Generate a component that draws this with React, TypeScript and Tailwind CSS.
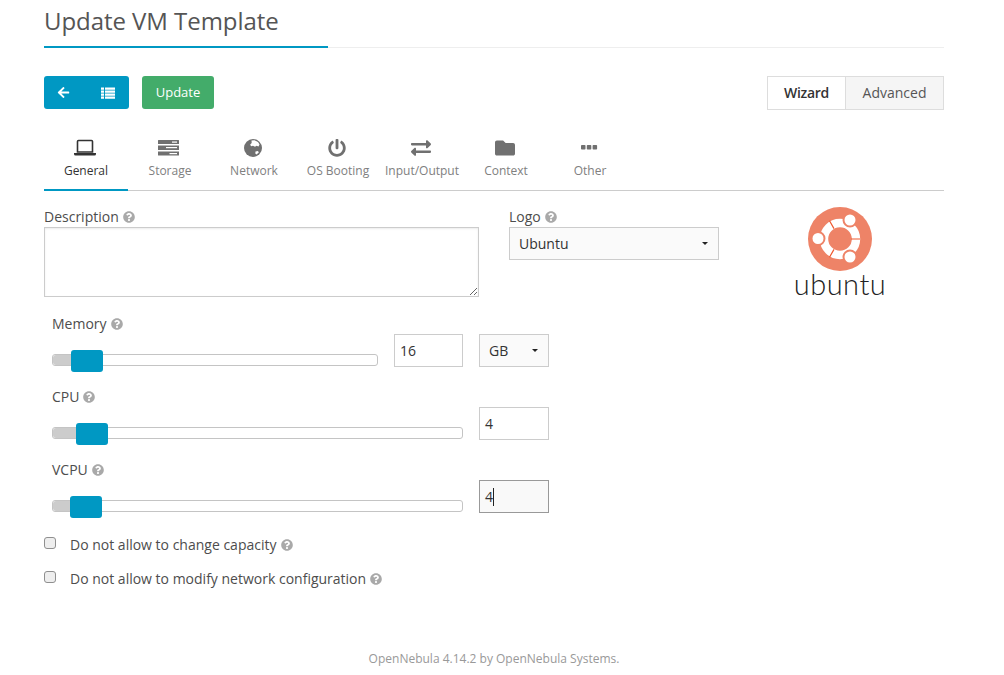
import { FaArrowLeft, FaPowerOff, FaExchangeAlt, FaFolder, FaQuestionCircle } from "react-icons/fa";

type IconProps = { className?: string };

function Dots({ className = "" }: IconProps) {
  return (
    <svg viewBox="0 0 20 20" className={className} fill="currentColor">
      <rect x="2" y="7" width="4.5" height="4.5" rx="0.8" />
      <rect x="7.8" y="7" width="4.5" height="4.5" rx="0.8" />
      <rect x="13.6" y="7" width="4.5" height="4.5" rx="0.8" />
    </svg>
  );
}

function Laptop({ className = "" }: IconProps) {
  return (
    <svg viewBox="0 0 22 20" className={className}>
      <path d="M3.5 3.5 a1 1 0 0 1 1-1 h13 a1 1 0 0 1 1 1 v10.5 h-15z" fill="none" stroke="currentColor" strokeWidth="1.6" />
      <path d="M0 15 h22 v1 a1.5 1.5 0 0 1-1.5 1.5 h-19 a1.5 1.5 0 0 1-1.5-1.5z" fill="currentColor" />
    </svg>
  );
}

function Storage({ className = "" }: IconProps) {
  return (
    <svg viewBox="0 0 21 20" className={className}>
      <path d="M0 2.5 a.5.5 0 0 1 .5-.5 h20 a.5.5 0 0 1 .5.5 v3.5 h-21z M0 7.5 h21 v4.5 h-21z M0 13.5 h21 v3.5 a.5.5 0 0 1-.5.5 h-20 a.5.5 0 0 1-.5-.5z" fill="currentColor" />
      <rect x="14" y="3.5" width="5" height="1.2" fill="#fff" />
      <rect x="8" y="9" width="11" height="1.2" fill="#fff" />
      <rect x="11.5" y="15" width="7.5" height="1.2" fill="#fff" />
    </svg>
  );
}

function Globe({ className = "" }: IconProps) {
  return (
    <svg viewBox="0 0 18 18" className={className}>
      <circle cx="9" cy="9" r="9" fill="currentColor" />
      <path d="M7.5 1.5 l3-.3 l3.5 1.8 l1.5 2.5 l-1 2 l-2-.7 l-1.5 1 l-2-1 l-2 .5 l-.8-1.8 l1.5-1.5z" fill="#fff" />
      <path d="M11.5 12.5 l2.5-.5 l.8 1.5 l-2.3 2 l-1.2-1z" fill="#fff" />
    </svg>
  );
}

function ThList({ className = "" }: IconProps) {
  return (
    <svg viewBox="0 0 14 12" className={className} fill="currentColor">
      <path d="M0 0.5 h3 v2.2 h-3z M4 0.5 h10 v2.2 h-10z M0 3.5 h3 v2.2 h-3z M4 3.5 h10 v2.2 h-10z M0 6.5 h3 v2.2 h-3z M4 6.5 h10 v2.2 h-10z M0 9.5 h3 v2.2 h-3z M4 9.5 h10 v2.2 h-10z" />
    </svg>
  );
}

const tabs = [
  { label: "General", icon: Laptop, size: "h-[20px] w-[22px]" },
  { label: "Storage", icon: Storage, size: "h-[20px] w-[21px]" },
  { label: "Network", icon: Globe, size: "my-px h-[18px] w-[18px]" },
  { label: "OS Booting", icon: FaPowerOff, size: "my-px h-[18px] w-[18px]" },
  { label: "Input/Output", icon: FaExchangeAlt, size: "h-[20px] w-[20px]" },
  { label: "Context", icon: FaFolder, size: "h-[20px] w-[20px]" },
  { label: "Other", icon: Dots, size: "h-[20px] w-[20px]" },
];

function Help({ className = "" }: { className?: string }) {
  return <FaQuestionCircle className={"inline-block h-3 w-3 text-[#a9a9a9] " + className} />;
}

function Caret() {
  return <span className="ml-auto h-0 w-0 border-x-[3px] border-t-[3px] border-x-transparent border-t-[#222]" />;
}

function Slider({ fill, left, width }: { fill: number; left: number; width: string }) {
  return (
    <div className={"relative mt-[11px] h-3 rounded-[3px] border border-[#c4c4c4] bg-white " + width}>
      <div className="h-full rounded-l-[3px] bg-[#cccccc]" style={{ width: fill }} />
      <div className="absolute top-[-5px] h-[22px] w-8 rounded-[3px] bg-[#0098c3]" style={{ left }} />
    </div>
  );
}

function Check({ label }: { label: string }) {
  return (
    <div className="flex h-[34px] items-center">
      <input type="checkbox" readOnly className="mb-[4px] h-3 w-3 appearance-none rounded-[3px] border border-[#8f8f8f] bg-[#eeeeee]" />
      <span className="mb-[1px] ml-[14px]">{label}</span>
      <Help className="ml-[4px]" />
    </div>
  );
}

export default function App() {
  return (
    <div className="h-[675px] w-[1004px] bg-white pl-11 pr-[60px] font-['Open_Sans',sans-serif] text-[14px] text-[#4d4d4d]">
      <div className="relative h-[48px] border-b border-[#eeeeee]">
        <h1 className="pt-[4px] text-[24px] leading-[33px] tracking-[-0.05px] text-[#555555]">Update VM Template</h1>
        <div className="absolute bottom-[-1px] left-0 h-[2px] w-[284px] bg-[#0098c3]" />
      </div>

      <div className="mt-[28px] flex h-[33px] items-start">
        <div className="flex h-[33px] w-[85px] items-center rounded-[3px] bg-[#0098c3] text-white">
          <div className="flex w-[42px] justify-center pr-[3px]"><FaArrowLeft className="h-[13px] w-[13px]" /></div>
          <div className="flex w-[43px] justify-center"><ThList className="h-[12px] w-[14px]" /></div>
        </div>
        <div className="ml-[13px] flex h-[33px] w-[72px] items-center justify-center rounded-[3px] bg-[#43ac6a] text-[13px] text-white">Update</div>
        <div className="ml-auto flex h-[34px]">
          <div className="flex w-[79px] items-center justify-center border border-[#dddddd] bg-white pb-[2px] font-semibold tracking-[-0.3px] text-[#333333]">Wizard</div>
          <div className="flex w-[98px] items-center justify-center border border-l-0 border-[#dddddd] bg-[#f5f5f5] pb-[2px] text-[#555555]">Advanced</div>
        </div>
      </div>

      <div className="mt-[29px] flex h-[53px] border-b border-[#cccccc]">
        {tabs.map((t, i) => {
          const Icon = t.icon;
          return (
            <div key={t.label} className={"flex h-[53px] w-[84px] flex-col items-center " + (i === 0 ? "border-b-2 border-[#0098c3] text-[#333333]" : "text-[#808080]")}>
              <Icon className={"mr-[3px] " + t.size + " " + (i === 0 ? "text-[#333333]" : "text-[#707070]")} />
              <span className="mt-[3px] whitespace-nowrap text-[12px] leading-[20px]">{t.label}</span>
            </div>
          );
        })}
      </div>

      <div className="mt-[16px] flex h-[106px]">
        <div className="w-[435px]">
          <div className="flex h-[20px] items-center gap-[4px] leading-[20px]">Description <Help /></div>
          <textarea readOnly className="block h-[70px] w-full border border-[#cccccc] bg-white shadow-[inset_0_1px_2px_rgba(0,0,0,0.08)]" />
        </div>
        <div className="ml-[30px] w-[210px]">
          <div className="flex h-[20px] items-center gap-[4px] leading-[20px]">Logo <Help /></div>
          <div className="flex h-[33px] items-center border border-[#cccccc] bg-[#fafafa] pl-[9px] pr-[10px] text-[#333333]">Ubuntu<Caret /></div>
        </div>
        <div className="ml-[76px] flex w-[90px] flex-col items-center">
          <svg viewBox="0 0 64 64" className="h-[64px] w-[64px]">
            <circle cx="32" cy="32" r="32" fill="#ee8367" />
            <circle cx="32" cy="32" r="16" fill="none" stroke="#fff" strokeWidth="8.4" />
            <path d="M43 32 L52 32 M26 21.6 L21.5 13.8 M26 42.4 L21.5 50.2" stroke="#f0592f" strokeWidth="1.2" />
            <circle cx="42" cy="13" r="6.5" fill="#fff" stroke="#ee8367" strokeWidth="2" />
            <circle cx="10" cy="31.5" r="6.5" fill="#fff" stroke="#ee8367" strokeWidth="2" />
            <circle cx="42" cy="50" r="6.5" fill="#fff" stroke="#ee8367" strokeWidth="2" />
          </svg>
          <span className="mt-[-3px] font-['Lato',sans-serif] text-[29px] font-light leading-[32px] tracking-[0.5px] text-[#222]">ubuntu</span>
        </div>
      </div>

      <div className="ml-2 h-[73px] pt-px">
        <div className="flex h-[20px] items-center gap-[4px] leading-[20px]">Memory <Help /></div>
        <div className="flex items-start">
          <div className="w-[326px] pt-[9px]"><Slider fill={24} left={18} width="w-[326px]" /></div>
          <div className="ml-4 flex h-[33px] w-[69px] items-center border border-[#cccccc] px-[5px] text-[#333333]">16</div>
          <div className="ml-4 flex h-[33px] w-[70px] items-center border border-[#cccccc] bg-[#fafafa] pl-[9px] pr-[10px] text-[#333333]">GB<Caret /></div>
        </div>
      </div>

      <div className="ml-2 h-[73px] pt-px">
        <div className="flex h-[20px] items-center gap-[4px] leading-[20px]">CPU <Help /></div>
        <div className="flex items-start">
          <div className="w-[411px] pt-[9px]"><Slider fill={28} left={23} width="w-[411px]" /></div>
          <div className="ml-4 flex h-[33px] w-[70px] items-center border border-[#cccccc] px-[5px] text-[#333333]">4</div>
        </div>
      </div>

      <div className="ml-2 h-[73px] pt-px">
        <div className="flex h-[20px] items-center gap-[4px] leading-[20px]">VCPU <Help /></div>
        <div className="flex items-start">
          <div className="w-[411px] pt-[9px]"><Slider fill={19} left={17} width="w-[411px]" /></div>
          <div className="ml-4 flex h-[33px] w-[70px] items-center border border-[#999999] bg-[#f9f9f9] px-[5px] text-[#333333]">4<span className="h-[18px] w-px bg-[#222]" /></div>
        </div>
      </div>

      <div className="mt-[-4px]">
        <Check label="Do not allow to change capacity" />
        <Check label="Do not allow to modify network configuration" />
      </div>

      <p className="mt-[53px] text-center text-[12px] leading-[20px] text-[#999999]">OpenNebula 4.14.2 by OpenNebula Systems.</p>
    </div>
  );
}
